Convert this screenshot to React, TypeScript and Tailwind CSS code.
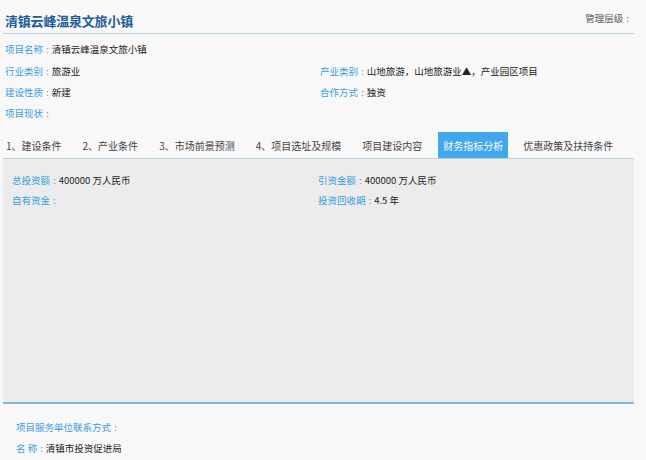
import React from 'react';

const font = { fontFamily: '"Noto Sans CJK SC", "Noto Sans", sans-serif' };

const Colon = () => <span className="px-[3px]">:</span>;

const Field: React.FC<{ label: string; value?: string; className?: string }> = ({ label, value, className }) => (
  <div className={`flex items-center whitespace-nowrap ${className ?? ''}`}>
    <span className="text-[#3a9edc]">
      {label}
      <Colon />
    </span>
    <span className="text-[#222]">{value}</span>
  </div>
);

const tabs = ['1、建设条件', '2、产业条件', '3、市场前景预测', '4、项目选址及规模', '项目建设内容', '财务指标分析', '优惠政策及扶持条件'];

export default function App() {
  const active = 5;
  return (
    <div className="w-[646px] h-[460px] overflow-hidden bg-[#f8f8f9] text-[9.5px]" style={font}>
      <div className="pl-[3px] pr-[12px]">
        {/* Header */}
        <div className="flex items-end justify-between h-[34px] pb-[6px] border-b border-[#b5d3e0]">
          <h1 className="pl-[2px] text-[13px] font-bold text-[#1c5c99] leading-none tracking-[-0.2px]">清镇云峰温泉文旅小镇</h1>
          <span className="text-[9.5px] text-[#555] pb-[2px] pr-[2px]">
            管理层级<Colon />
          </span>
        </div>

        {/* Info rows */}
        <div className="pl-[2px] pt-[5px] flex flex-col">
          <div className="h-[21px] flex items-center">
            <Field label="项目名称" value="清镇云峰温泉文旅小镇" />
          </div>
          <div className="h-[22px] grid grid-cols-[315px_1fr] items-center">
            <Field label="行业类别" value="旅游业" />
            <Field label="产业类别" value="山地旅游，山地旅游业▲，产业园区项目" />
          </div>
          <div className="h-[21px] grid grid-cols-[315px_1fr] items-center">
            <Field label="建设性质" value="新建" />
            <Field label="合作方式" value="独资" />
          </div>
          <div className="h-[21px] flex items-center">
            <Field label="项目现状" />
          </div>
        </div>

        {/* Tabs */}
        <div className="mt-[9px] flex items-end h-[26px] border-b border-[#b5d3e0] text-[10px] text-[#444]">
          {tabs.map((t, i) => (
            <div
              key={t}
              className={`h-[26px] flex items-center whitespace-nowrap ${
                i === active
                  ? 'bg-[#42a8ee] text-white px-[5px] mr-[15px]'
                  : i === 0
                  ? 'pl-[3px] pr-[21px]'
                  : i === active - 1
                  ? 'pr-[16px]'
                  : 'pr-[21px]'
              }`}
            >
              {t}
            </div>
          ))}
        </div>

        {/* Panel */}
        <div className="h-[245px] bg-[#ececed] border-b-2 border-[#7cbbe6] pl-[9px] pt-[11px]">
          <div className="h-[20px] grid grid-cols-[306px_1fr] items-center">
            <Field label="总投资额" value="400000 万人民币" />
            <Field label="引资金额" value="400000 万人民币" />
          </div>
          <div className="h-[20px] grid grid-cols-[306px_1fr] items-center">
            <Field label="自有资金" />
            <Field label="投资回收期" value="4.5 年" />
          </div>
        </div>

        {/* Contact */}
        <div className="pl-[13px] pt-[13px]">
          <div className="h-[20px] flex items-center text-[#3a9edc]">
            项目服务单位联系方式<Colon />
          </div>
          <div className="h-[22px] flex items-center">
            <span className="text-[#3a9edc]">
              名 称<Colon />
            </span>
            <span className="text-[#222]">清镇市投资促进局</span>
          </div>
        </div>
      </div>
    </div>
  );
}
